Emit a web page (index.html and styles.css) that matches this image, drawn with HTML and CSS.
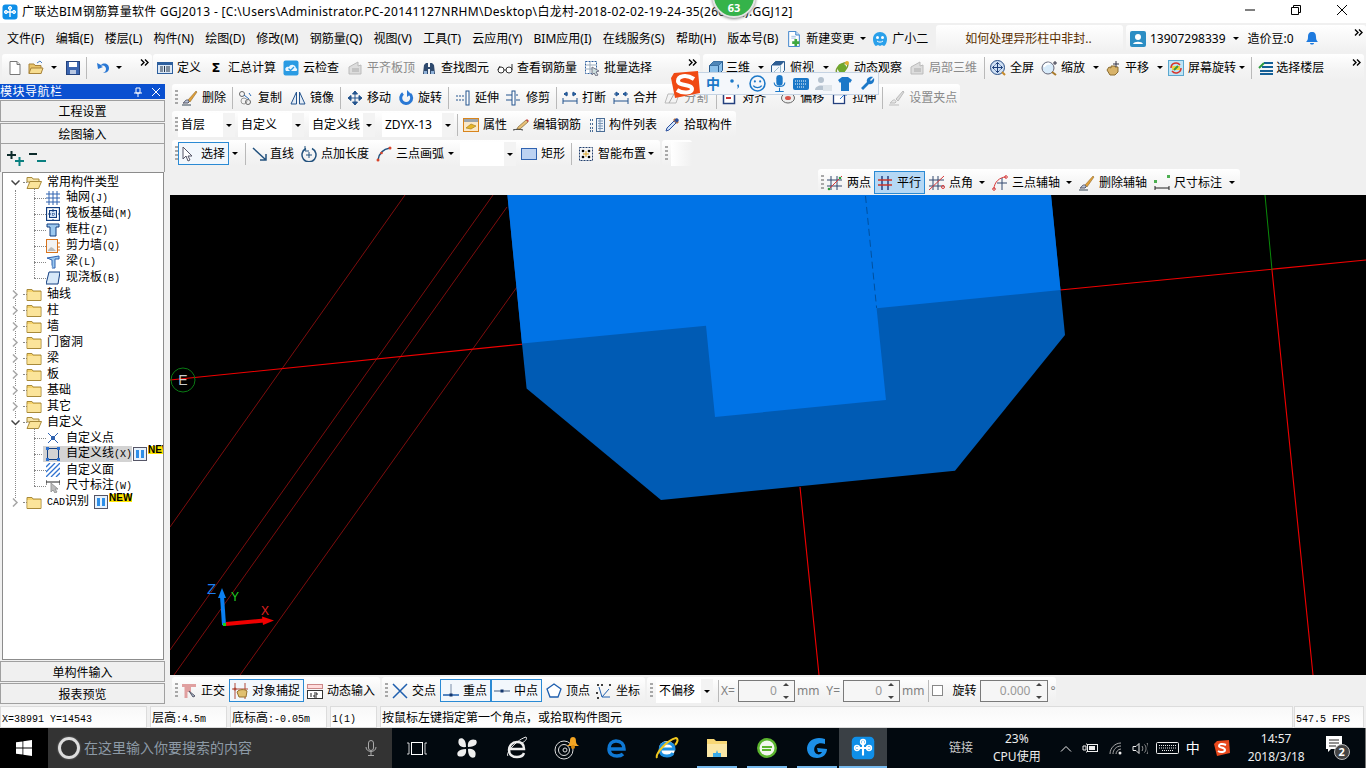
FILE: index.html
```html
<!DOCTYPE html>
<html lang="zh-CN">
<head>
<meta charset="utf-8">
<title>广联达BIM钢筋算量软件 GGJ2013</title>
<link rel="stylesheet" href="styles.css">
</head>
<body>
<svg class="defs" aria-hidden="true">
<symbol id="more" viewBox="0 0 9 7"><path d="M1 .5l3 3-3 3M5 .5l3 3-3 3" fill="none" stroke="#000" stroke-width="1.400"/></symbol>
<symbol id="app" viewBox="0 0 16 16"><rect x=".5" y=".5" width="15" height="15" rx="3" fill="#0f8fe8"/><path d="M8 3v10M3 8h10" stroke="#fff" stroke-width="1.4" fill="none"/><circle cx="4" cy="8" r="1.6" fill="none" stroke="#fff"/><circle cx="12" cy="8" r="1.6" fill="none" stroke="#fff"/><circle cx="8" cy="4" r="1.6" fill="none" stroke="#fff"/></symbol>
<symbol id="doc" viewBox="0 0 16 16"><path d="M3 1.500h7l3 3v10H3z" fill="#fff" stroke="#777"/><path d="M10 1.500v3h3" fill="#ddd" stroke="#777"/></symbol>
<symbol id="newchg" viewBox="0 0 16 18"><path d="M2 .5h8l4 4v13H2z" fill="#fff" stroke="#2a78c8"/><path d="M10 .5v4h4" fill="#cfe2f6" stroke="#2a78c8"/><path d="M5 6h5M5 8h5" stroke="#9bbbe0"/><path d="M10 9v8M6 13h8" stroke="#3fa83f" stroke-width="3"/></symbol>
<symbol id="open" viewBox="0 0 16 16"><path d="M1 4h5l1 1.500h6v8H1z" fill="#e9c46a" stroke="#a8833a"/><path d="M3 8h12l-2 5.500H1z" fill="#f7dd90" stroke="#a8833a"/><path d="M9 3l3-2 2 2" fill="none" stroke="#4a7ec0"/></symbol>
<symbol id="save" viewBox="0 0 16 16"><rect x="1.500" y="1.500" width="13" height="13" fill="#3c66b0" stroke="#24437e"/><rect x="4" y="2" width="8" height="5" fill="#fff"/><rect x="5" y="10" width="6" height="4" fill="#b9c8e2"/></symbol>
<symbol id="undo" viewBox="0 0 16 16"><path d="M2 3l1 6 5-2-2-1c3-1.500 5 1 5 3 0 2-1 3-3 4 5 0 6-3 6-5 0-4-5-6-8-3z" fill="#2a78d4"/></symbol>
<symbol id="def" viewBox="0 0 16 16"><rect x=".5" y="2.500" width="15" height="11" fill="#dce8f6" stroke="#2d5f9e"/><rect x="1" y="3" width="14" height="2" fill="#2d5f9e"/><path d="M3 7h3M3 9h3M3 11h3M9 7h4M9 9h4M9 11h4M7.500 6v6" stroke="#234" fill="none"/></symbol>
<symbol id="cloud" viewBox="0 0 16 16"><rect x=".5" y=".5" width="15" height="15" rx="2" fill="#2a9be3"/><path d="M3 11c-2-3 1-5 3-4 1-3 6-3 7 1 2 1 1 3 0 3z" fill="#eaf6ff"/><path d="M5.500 8.500l2 2 3.500-3.500" stroke="#2a9be3" stroke-width="1.300" fill="none"/></symbol>
<symbol id="gray3" viewBox="0 0 16 16"><path d="M2 14V7l9-5v4l3-1v9z" fill="#ddd" stroke="#bbb"/><path d="M5 9h7M5 11h7" stroke="#aaa"/></symbol>
<symbol id="bino" viewBox="0 0 16 16"><path d="M2 14l1-9 2-2h2v4h2V3h2l2 2 1 9H9V9H7v5z" fill="#2f4a6e"/><rect x="3" y="11" width="3" height="3" fill="#8fb1d8"/><rect x="10" y="11" width="3" height="3" fill="#8fb1d8"/></symbol>
<symbol id="glass" viewBox="0 0 16 16"><circle cx="4" cy="10" r="3" fill="#fff" stroke="#333"/><circle cx="12" cy="10" r="3" fill="#fff" stroke="#333"/><path d="M7 10h2M1 10l2-4M15 10V4" stroke="#333" fill="none"/></symbol>
<symbol id="batch" viewBox="0 0 16 16"><rect x="1.500" y="1.500" width="11" height="12" fill="#fff" stroke="#2d5f9e" stroke-dasharray="2 1"/><path d="M2 5h10M2 9h10M6 2v11" stroke="#9ab"/><path d="M8 7l7 4-3 1 2 3-2 1-2-3-2 2z" fill="#cdd" stroke="#778"/></symbol>
<symbol id="cube" viewBox="0 0 16 16"><path d="M1.500 5.500l4-4h9v9l-4 4h-9z" fill="#8cc0ea" stroke="#2a5c8e"/><path d="M1.500 5.500h9v9M10.500 5.500l4-4" fill="none" stroke="#2a5c8e"/><path d="M1.500 5.500l4-4h9l-4 4z" fill="#4f86b8"/></symbol>
<symbol id="top" viewBox="0 0 16 16"><path d="M1.500 5.500l4-4h9v9l-4 4h-9z" fill="#f4f8fc" stroke="#2a5c8e"/><path d="M1.500 5.500l4-4h9l-4 4z" fill="#2f5f94"/><path d="M10.500 5.500v9M3 13l6-6" stroke="#9bc" fill="none"/></symbol>
<symbol id="orbit" viewBox="0 0 16 16"><ellipse cx="8" cy="8" rx="7" ry="3.500" transform="rotate(-40 8 8)" fill="none" stroke="#7a9a30" stroke-width="1.500"/><circle cx="8" cy="8" r="4.500" fill="#6fa82c"/><circle cx="13" cy="3" r="2" fill="#e0b030"/></symbol>
<symbol id="full" viewBox="0 0 16 16"><circle cx="7.500" cy="7.500" r="7" fill="#cfe0f4" stroke="#2a4f86"/><path d="M7.500 2.500v10M2.500 7.500h10M7.500 2.500l-2 2M7.500 2.500l2 2M7.500 12.500l-2-2M7.500 12.500l2-2M2.500 7.500l2-2M2.500 7.500l2 2M12.500 7.500l-2-2M12.500 7.500l-2 2" stroke="#1d3f7a" fill="none"/><path d="M12 12l3 3" stroke="#c68a2a" stroke-width="2"/></symbol>
<symbol id="zoom" viewBox="0 0 16 16"><circle cx="7" cy="8" r="6" fill="#d8ebfa" stroke="#667"/><path d="M3 7c1-3 4-4 6-3" stroke="#fff" stroke-width="2" fill="none"/><path d="M11 12l4 3" stroke="#a97a2a" stroke-width="2"/><path d="M14 1v4M12 3h4" stroke="#334"/></symbol>
<symbol id="hand" viewBox="0 0 16 16"><path d="M2 10l2-3 2 1 0-2 2 0 0 0 2 0 0 1 3 0 0 5-3 3H5z" fill="#d8b36a" stroke="#8a6c30"/><path d="M11 1v6M8 4h6" stroke="#334"/></symbol>
<symbol id="rot" viewBox="0 0 16 16"><rect x=".5" y=".5" width="15" height="15" fill="#bfe4f6" stroke="#5aa7cf"/><path d="M3 8a5 5 0 0 1 9-3M13 8a5 5 0 0 1-9 3" stroke="#d8342a" stroke-width="1.500" fill="none"/><rect x="4" y="6" width="8" height="4" fill="#f2d040"/><path d="M6 10l4-4" stroke="#3a9a3a" stroke-width="2"/></symbol>
<symbol id="floors" viewBox="0 0 16 16"><path d="M6 3h9M4 7h11M2 11h13M2 14h13" stroke="#155f96" stroke-width="2"/><path d="M1 8l5-5" stroke="#2c9a3c" stroke-width="2"/></symbol>
<symbol id="brush" viewBox="0 0 16 16"><path d="M6 10l8-9 1 1-7 10z" fill="#e0a038" stroke="#805a20" stroke-width=".5"/><path d="M3 11c2-2 4-1 4 1l-1 1H1c1 0 1-1 2-2z" fill="#b8c4d8" stroke="#556"/><path d="M0 15h9" stroke="#345"/></symbol>
<symbol id="copy" viewBox="0 0 16 16"><circle cx="4" cy="4" r="2.500" fill="none" stroke="#666"/><circle cx="10" cy="12" r="2.500" fill="none" stroke="#666"/><circle cx="6" cy="11" r="3" fill="none" stroke="#999"/><path d="M6 5l5 4M11 3l2 3" stroke="#2a6cb8" fill="none"/></symbol>
<symbol id="mirror" viewBox="0 0 16 16"><path d="M6.500 2L1 14h5.500zM9.500 2L15 14H9.500z" fill="#e4ecf6" stroke="#24548e"/></symbol>
<symbol id="move" viewBox="0 0 16 16"><path d="M8 1v14M1 8h14M8 1L5.500 4h5zM8 15l-2.500-3h5zM1 8l3-2.500v5zM15 8l-3-2.500v5z" fill="#24548e" stroke="#24548e"/></symbol>
<symbol id="spin" viewBox="0 0 16 16"><path d="M5 3.500A5.500 5.500 0 1 0 12 4" fill="none" stroke="#2a78d4" stroke-width="3"/><path d="M9 0v7l4-3z" fill="#2a78d4"/></symbol>
<symbol id="ext" viewBox="0 0 16 16"><path d="M1 6h8M1 10h8" stroke="#24548e" stroke-dasharray="2 1"/><rect x="11" y="1" width="3" height="14" fill="#fff" stroke="#24548e"/></symbol>
<symbol id="trim" viewBox="0 0 16 16"><path d="M0 5h6M0 10h6M10 5h2M10 10h4" stroke="#24548e"/><rect x="6" y="1" width="3" height="14" fill="#fff" stroke="#24548e"/></symbol>
<symbol id="brk" viewBox="0 0 16 16"><path d="M1 8v6M15 8v6M1 11h14M2 4h4M14 4h-4M2 4l3-2v4zM14 4l-3-2v4z" stroke="#24548e" fill="#2a78d4"/></symbol>
<symbol id="mrg" viewBox="0 0 16 16"><path d="M1 8v6M15 8v6M1 11h14M1 4h5M15 4h-5M6 4L3 2v4zM10 4l3-2v4z" stroke="#24548e" fill="#2a78d4"/></symbol>
<symbol id="split" viewBox="0 0 16 16"><path d="M1 13l3-9h11l-3 9z" fill="#f3f3f3" stroke="#bbb"/><path d="M5 13l5-9" stroke="#aaa"/></symbol>
<symbol id="algn" viewBox="0 0 16 16"><rect x="1.500" y="2.500" width="11" height="11" fill="#fff" stroke="#24407e" stroke-width="1.500"/><path d="M4 8h5" stroke="#c33" stroke-width="2"/></symbol>
<symbol id="offs" viewBox="0 0 16 16"><ellipse cx="8" cy="8" rx="6.500" ry="5" fill="#eee" stroke="#666"/><ellipse cx="8" cy="8" rx="3" ry="2" fill="#d8544a"/></symbol>
<symbol id="strch" viewBox="0 0 16 16"><rect x="1.500" y="4.500" width="11" height="9" fill="#fff" stroke="#24407e" stroke-width="1.300"/><path d="M8 9l6-6M11 3h3v3" stroke="#2a78d4" fill="none"/></symbol>
<symbol id="gbrush" viewBox="0 0 16 16"><path d="M7 9l7-8 1 1-6 9z" fill="#ddd" stroke="#bbb"/><path d="M3 11c2-2 4-1 4 1l-1 1H1c1 0 1-1 2-2zM0 15h10" fill="#e8e8e8" stroke="#bbb"/></symbol>
<symbol id="prop" viewBox="0 0 16 16"><rect x=".5" y="1.500" width="15" height="13" fill="#fbe8c8" stroke="#d8841c"/><rect x="1" y="2" width="14" height="3" fill="#9aa4ae"/><path d="M3 11l5-4 5 2-5 3z" fill="#e7b528" stroke="#9a7818" stroke-width=".6"/></symbol>
<symbol id="edit" viewBox="0 0 16 16"><path d="M0 13c4-1 6-1 10 0" fill="none" stroke="#333"/><path d="M5 10l8-7 2 2-8 7-3 0z" fill="#e8c078" stroke="#6a5220" stroke-width=".6"/><path d="M13 3l2 2 1-1-2-2z" fill="#c44"/></symbol>
<symbol id="list" viewBox="0 0 16 16"><rect x="7.500" y="1.500" width="8" height="13" fill="#eef4fb" stroke="#4a6d96"/><path d="M9 4h5M9 6.500h5M9 9h5M9 11.500h5M11 2v12" stroke="#7d97b6"/><path d="M1 3h3M1 7h3M1 11h3M1 14h3" stroke="#4a6d96" stroke-width="2" stroke-dasharray="1 1"/></symbol>
<symbol id="pick" viewBox="0 0 16 16"><path d="M2 14l1-3 7-7 2 2-7 7z" fill="#cfe2f8" stroke="#2a4f9e"/><path d="M9 3l4 4 2-2-4-4z" fill="#d8823a"/><path d="M10 3l3-2 2 2-2 3z" fill="#2a4f9e"/></symbol>
<symbol id="cur" viewBox="0 0 16 16"><path d="M2 1v12l3-3 2 5 2-1-2-4h4z" fill="#fff" stroke="#556"/></symbol>
<symbol id="ln" viewBox="0 0 16 16"><path d="M1 2l13 12M8 14h6V8" stroke="#23527e" stroke-width="1.500" fill="none"/></symbol>
<symbol id="ptlen" viewBox="0 0 16 16"><path d="M5 2.500a7 7 0 1 0 6 0" fill="none" stroke="#23527e" stroke-width="1.500"/><path d="M4 0v5h4" fill="none" stroke="#23527e"/><path d="M8 6v6M5 9h6" stroke="#23527e"/></symbol>
<symbol id="arc" viewBox="0 0 16 16"><path d="M2 14C3 7 8 3 14 2" fill="none" stroke="#23527e" stroke-width="1.500"/><circle cx="2" cy="14" r="1.500" fill="#d8442a"/><circle cx="5.500" cy="7" r="1.300" fill="#d8442a"/><circle cx="14" cy="2" r="1.500" fill="#d8442a"/></symbol>
<symbol id="rect" viewBox="0 0 16 16"><rect x=".5" y="2.500" width="15" height="11" fill="#bcd2f2" stroke="#2f62b0"/></symbol>
<symbol id="smart" viewBox="0 0 16 16"><rect x="1.500" y="1.500" width="13" height="13" fill="#f6f6f6" stroke="#23406e" stroke-dasharray="2 1"/><circle cx="5" cy="5" r="1.300"/><circle cx="11" cy="5" r="1.300"/><circle cx="5" cy="11" r="1.300"/><circle cx="11" cy="11" r="1.300"/><path d="M8 5v6M5 8h6" stroke="#d8a020"/></symbol>
<symbol id="tp" viewBox="0 0 16 16"><path d="M4 1v14M10 1v14M0 5h15M0 11h15" stroke="#33496e"/><path d="M1 15L15 1" stroke="#d83a3a"/><circle cx="2" cy="14" r="1.300" fill="#2a9a3a"/><circle cx="13" cy="3" r="1.300" fill="#2a9a3a"/></symbol>
<symbol id="par" viewBox="0 0 16 16"><path d="M5 1v14M11 1v14" stroke="#2a3f7e" stroke-width="1.500"/><path d="M1 5h14M1 10h14" stroke="#c8342a" stroke-width="1.500"/></symbol>
<symbol id="ang" viewBox="0 0 16 16"><path d="M4 1v14M9 1v14M0 5h15M0 11h15" stroke="#33496e"/><path d="M0 15L15 1" stroke="#d83a3a"/><circle cx="14" cy="12" r="1.500" fill="none" stroke="#d83a3a"/></symbol>
<symbol id="axis3" viewBox="0 0 16 16"><path d="M2 14C2 7 8 2 14 2" fill="none" stroke="#d83a3a"/><circle cx="2" cy="14" r="1.300" fill="none" stroke="#d83a3a"/><circle cx="14" cy="2" r="1.300" fill="none" stroke="#d83a3a"/><path d="M10 3v12M5 8h10" stroke="#33496e"/></symbol>
<symbol id="dim" viewBox="0 0 16 16"><path d="M1 11v4M15 11v4M1 13h14" stroke="#222"/><rect x="0" y="5" width="3" height="3" fill="#4caf50"/><rect x="13" y="0" width="3" height="3" fill="#4caf50"/></symbol>
<symbol id="orth" viewBox="0 0 16 16"><path d="M1 1h14v3H10v5H6V4H1z" fill="#e0a0a0"/><path d="M5 3v12" stroke="#e0a0a0" stroke-width="3"/><path d="M8 8l6 5-2 1z" fill="#bbccdd" stroke="#556"/></symbol>
<symbol id="snap" viewBox="0 0 16 16"><path d="M3 0v16M13 0v16" stroke="#b04a3a"/><path d="M0 6h16" stroke="#b04a3a"/><circle cx="3" cy="6" r="1.500" fill="#b04a3a"/><path d="M5 9c2-3 8-3 10-1l-1 6H7z" fill="#e0c070" stroke="#96702c"/></symbol>
<symbol id="dyn" viewBox="0 0 16 16"><rect x=".5" y="1.500" width="15" height="4" fill="#ffdcdc" stroke="#c88"/><rect x=".5" y="7.500" width="15" height="8" fill="#fff" stroke="#333"/><path d="M4 10v4M7 10h3v2H7v2h3" stroke="#222" fill="none"/></symbol>
<symbol id="cross" viewBox="0 0 16 16"><path d="M1 1l14 14M15 1L1 15" stroke="#1f5fae" stroke-width="1.500"/></symbol>
<symbol id="perp" viewBox="0 0 16 16"><path d="M0 12h16" stroke="#1f5fae" stroke-width="1.500"/><path d="M8 1v11" stroke="#7a8ea8"/><rect x="6.500" y="10.500" width="3" height="3" fill="#12366e"/></symbol>
<symbol id="mid" viewBox="0 0 16 16"><path d="M0 8h16" stroke="#7a8ea8" stroke-width="1.500"/><rect x="6.500" y="6.500" width="3" height="3" fill="#12366e"/></symbol>
<symbol id="pent" viewBox="0 0 16 16"><path d="M8 1l7 5-3 8H4L1 6z" fill="#fff" stroke="#1f5fae" stroke-width="1.300"/></symbol>
<symbol id="coord" viewBox="0 0 16 16"><path d="M6 14L3 4M6 14h8M6 14l7-8" stroke="#1f5fae" fill="none"/><circle cx="2" cy="2" r="1"/><circle cx="6" cy="2" r="1"/><circle cx="14" cy="2" r="1"/><circle cx="1" cy="10" r="1"/><circle cx="2" cy="15" r="1"/></symbol>
<symbol id="ffold" viewBox="0 0 16 14"><path d="M1 2.500h5l1 1.500h8v9.500H1z" fill="#f6d36c" stroke="#a88a3a"/><rect x="1.500" y="5" width="13" height="8" fill="#fbe49a"/></symbol>
<symbol id="fopen" viewBox="0 0 16 14"><path d="M1 2.500h5l1 1.500h6v3H1z" fill="#f6e4a8" stroke="#a88a3a"/><path d="M1 13.500l3-7h11.500l-3 7z" fill="#fbe49a" stroke="#a88a3a"/></symbol>
<symbol id="chr" viewBox="0 0 9 9"><path d="M2 .5l4 4-4 4" fill="none" stroke="#a6a6a6" stroke-width="1.500"/></symbol>
<symbol id="chd" viewBox="0 0 9 9"><path d="M.5 2.500l4 4 4-4" fill="none" stroke="#444" stroke-width="1.500"/></symbol>
<symbol id="tgrid" viewBox="0 0 14 14"><path d="M0 3h14M0 7h14M0 11h14M3 0v14M7 0v14M11 0v14" stroke="#2f62b0"/></symbol>
<symbol id="traft" viewBox="0 0 14 14"><rect x=".5" y=".5" width="13" height="13" fill="#fff" stroke="#123e80" stroke-width="1.300"/><rect x="3.500" y="3.500" width="7" height="7" fill="#cfe0f4" stroke="#123e80"/><path d="M7 0v14M0 7h14" stroke="#123e80" stroke-dasharray="1 1"/></symbol>
<symbol id="tcol" viewBox="0 0 14 14"><path d="M1 1h12v3h-3v9H4V4H1z" fill="#9cc8ee" stroke="#123e80"/></symbol>
<symbol id="twall" viewBox="0 0 14 14"><rect x=".5" y=".5" width="11" height="13" fill="#f3f3f3" stroke="#d8731c"/><path d="M2 11l3-3 2 1 3 3H2z" fill="#bbb"/><path d="M12 4h2M12 8h2M12 11h2" stroke="#d8731c"/></symbol>
<symbol id="tbeam" viewBox="0 0 14 14"><path d="M1 3l12-2v3H9v9H6V5z" fill="#9cc8ee" stroke="#2f62b0"/><path d="M2 4l4 9" stroke="#fff"/></symbol>
<symbol id="tslab" viewBox="0 0 14 14"><path d="M3 1h11l-2 12H0z" fill="#d7e8f8" stroke="#123e80"/></symbol>
<symbol id="tpt" viewBox="0 0 14 14"><path d="M2 2l10 10M12 2L2 12" stroke="#2f62b0"/><rect x="5" y="5" width="4" height="4" fill="#2f62b0"/></symbol>
<symbol id="tln" viewBox="0 0 14 14"><rect x="1.500" y="1.500" width="11" height="11" fill="none" stroke="#123e80"/><path d="M0 0h3v3H0zM11 0h3v3h-3zM0 11h3v3H0zM11 11h3v3h-3z" fill="#2f72d0"/></symbol>
<symbol id="thatch" viewBox="0 0 14 14"><path d="M0 4l4-4M0 9l9-9M0 14L14 0M5 14l9-9M10 14l4-4" stroke="#2f72d0" stroke-width="1.300"/></symbol>
<symbol id="tdim" viewBox="0 0 14 14"><path d="M0 1v5M14 1v5M0 3h14" stroke="#222"/><path d="M5 4v9l2-2 2 3 2-1-2-3h3z" fill="#bbb" stroke="#999"/></symbol>
<symbol id="tnew" viewBox="0 0 14 14"><rect x=".5" y=".5" width="13" height="13" fill="#e8f2fc" stroke="#556"/><path d="M3 3h3v8H3zM8 3h3v8H8z" fill="#2f8fe8"/></symbol>
</svg>

<div class="title">
  <svg class="appicon"><use href="#app"/></svg>
  <span class="title-text">广联达BIM钢筋算量软件 GGJ2013 - [C:\Users\Administrator.PC-20141127NRHM\Desktop\白龙村-2018-02-02-19-24-35(2606版).GGJ12]</span>
  <div class="winbtns">
    <svg width="12" height="12" viewBox="0 0 12 12"><path d="M1 6h10" stroke="#000"/></svg>
    <svg width="12" height="12" viewBox="0 0 12 12"><path d="M1.500 3.500h7v7h-7zM3.500 3V1.500h7v7H9" fill="none" stroke="#000"/></svg>
    <svg width="12" height="12" viewBox="0 0 12 12"><path d="M1 1l10 10M11 1L1 11" stroke="#000"/></svg>
  </div>
</div>

<div class="menu">
  <nav class="menu-items">
    <span>文件(F)</span><span>编辑(E)</span><span>楼层(L)</span><span>构件(N)</span><span>绘图(D)</span><span>修改(M)</span><span>钢筋量(Q)</span><span>视图(V)</span><span>工具(T)</span><span>云应用(Y)</span><span>BIM应用(I)</span><span>在线服务(S)</span><span>帮助(H)</span><span>版本号(B)</span>
  </nav>
  <div class="t g8"><svg class="i"><use href="#newchg"/></svg>新建变更</div><i class="ar g6"></i>
  <div class="t g6"><svg class="i" viewBox="0 0 16 16"><path d="M8 1c4 0 7 3 7 7s-2 7-3 7l-2-1-2 1-2-1-2 1c-1 0-3-3-3-7s3-7 7-7z" fill="#2aa0ea"/><circle cx="5.500" cy="6.500" r="1.500" fill="#fff"/><circle cx="10.500" cy="6.500" r="1.500" fill="#fff"/><path d="M5 10c2 1.500 4 1.500 6 0" stroke="#fff" fill="none"/></svg>广小二</div>
  <div class="tab">如何处理异形柱中非封..</div>
  <div class="user">
    <svg class="i" viewBox="0 0 16 16"><rect width="16" height="16" rx="2" fill="#2c8ec4"/><circle cx="8" cy="6" r="3" fill="#fff"/><path d="M3 13c1-3 9-3 10 0z" fill="#fff"/></svg>
    <span class="phone">13907298339</span><i class="ar g7"></i><span class="g9">造价豆:0</span>
    <svg class="i g10" viewBox="0 0 16 16"><path d="M8 1c3 0 4 2 4 5s1 4 2 5H2c1-1 2-2 2-5s1-5 4-5zM6 12h4c0 2-4 2-4 0z" fill="#1e7ade"/></svg>
    <svg class="more"><use href="#more"/></svg>
  </div>
</div>

<div class="row tb1">
  <div class="seg s1a">
    <svg class="i g5"><use href="#doc"/></svg><svg class="i g5"><use href="#open"/></svg><i class="ar g7"></i><svg class="i g8"><use href="#save"/></svg><b class="sep g5"></b><svg class="i g8"><use href="#undo"/></svg><i class="ar g5"></i><svg class="more"><use href="#more"/></svg>
  </div>
  <div class="seg s1b">
    <div class="t"><svg class="i"><use href="#def"/></svg>定义</div>
    <div class="t g7"><span class="sig">Σ</span>汇总计算</div>
    <div class="t g7"><svg class="i"><use href="#cloud"/></svg>云检查</div>
    <div class="t g8 off"><svg class="i"><use href="#gray3"/></svg>平齐板顶</div>
    <div class="t g6"><svg class="i"><use href="#bino"/></svg>查找图元</div>
    <div class="t g8"><svg class="i"><use href="#glass"/></svg>查看钢筋量</div>
    <div class="t g7"><svg class="i"><use href="#batch"/></svg>批量选择</div>
    <svg class="more"><use href="#more"/></svg>
  </div>
  <div class="seg s1c">
    <div class="t tight"><svg class="i"><use href="#cube"/></svg>三维</div><i class="ar g8"></i>
    <div class="t g6"><svg class="i"><use href="#top"/></svg>俯视</div><i class="ar g9"></i>
    <div class="t g5"><svg class="i"><use href="#orbit"/></svg>动态观察</div>
    <div class="t g7 off"><svg class="i"><use href="#gray3"/></svg>局部三维</div>
    <b class="sep g7"></b>
    <div class="t g5"><svg class="i"><use href="#full"/></svg>全屏</div>
    <div class="t g7"><svg class="i"><use href="#zoom"/></svg>缩放</div><i class="ar g8"></i>
    <div class="t g6"><svg class="i"><use href="#hand"/></svg>平移</div><i class="ar g8"></i>
    <div class="t g5"><svg class="i"><use href="#rot"/></svg>屏幕旋转</div><i class="ar g3"></i>
    <b class="sep g6"></b>
    <div class="t g6 tight"><svg class="i"><use href="#floors"/></svg>选择楼层</div>
    <svg class="more"><use href="#more"/></svg>
  </div>
</div>

<div class="work">
  <aside class="nav">
    <header class="nav-head"><span>模块导航栏</span>
      <svg width="10" height="10" viewBox="0 0 10 10"><path d="M3 1h4v5H3zM1 6h8M5 6v4" fill="none" stroke="#fff"/></svg>
      <svg width="10" height="10" viewBox="0 0 10 10"><path d="M1 1l8 8M9 1L1 9" stroke="#fff"/></svg>
    </header>
    <div class="nav-btn first">工程设置</div>
    <div class="nav-btn">绘图输入</div>
    <div class="nav-tools">
      <svg width="17" height="16" viewBox="0 0 17 16"><path d="M0 5h9M4.500 1v8" stroke="#0d2b2b" stroke-width="2"/><path d="M8 11h9M12.500 7v9" stroke="#0a8080" stroke-width="2"/></svg>
      <svg width="17" height="16" viewBox="0 0 17 16"><path d="M0 4h8" stroke="#0d2b2b" stroke-width="2"/><path d="M8 11h9" stroke="#0a8080" stroke-width="2"/></svg>
    </div>
    <div class="tree">
      <div class="node"><svg class="chev"><use href="#chd"/></svg><i class="dt"></i><svg class="fold"><use href="#fopen"/></svg><span>常用构件类型</span></div>
      <div class="kids">
        <div class="leaf"><i class="dl"></i><svg class="li"><use href="#tgrid"/></svg><span>轴网<u>(J)</u></span></div>
        <div class="leaf"><i class="dl"></i><svg class="li"><use href="#traft"/></svg><span>筏板基础<u>(M)</u></span></div>
        <div class="leaf"><i class="dl"></i><svg class="li"><use href="#tcol"/></svg><span>框柱<u>(Z)</u></span></div>
        <div class="leaf"><i class="dl"></i><svg class="li"><use href="#twall"/></svg><span>剪力墙<u>(Q)</u></span></div>
        <div class="leaf"><i class="dl"></i><svg class="li"><use href="#tbeam"/></svg><span>梁<u>(L)</u></span></div>
        <div class="leaf"><i class="dl"></i><svg class="li"><use href="#tslab"/></svg><span>现浇板<u>(B)</u></span></div>
      </div>
      <div class="node"><svg class="chev"><use href="#chr"/></svg><i class="dt"></i><svg class="fold"><use href="#ffold"/></svg><span>轴线</span></div>
      <div class="node"><svg class="chev"><use href="#chr"/></svg><i class="dt"></i><svg class="fold"><use href="#ffold"/></svg><span>柱</span></div>
      <div class="node"><svg class="chev"><use href="#chr"/></svg><i class="dt"></i><svg class="fold"><use href="#ffold"/></svg><span>墙</span></div>
      <div class="node"><svg class="chev"><use href="#chr"/></svg><i class="dt"></i><svg class="fold"><use href="#ffold"/></svg><span>门窗洞</span></div>
      <div class="node"><svg class="chev"><use href="#chr"/></svg><i class="dt"></i><svg class="fold"><use href="#ffold"/></svg><span>梁</span></div>
      <div class="node"><svg class="chev"><use href="#chr"/></svg><i class="dt"></i><svg class="fold"><use href="#ffold"/></svg><span>板</span></div>
      <div class="node"><svg class="chev"><use href="#chr"/></svg><i class="dt"></i><svg class="fold"><use href="#ffold"/></svg><span>基础</span></div>
      <div class="node"><svg class="chev"><use href="#chr"/></svg><i class="dt"></i><svg class="fold"><use href="#ffold"/></svg><span>其它</span></div>
      <div class="node"><svg class="chev"><use href="#chd"/></svg><i class="dt"></i><svg class="fold"><use href="#fopen"/></svg><span>自定义</span></div>
      <div class="kids">
        <div class="leaf"><i class="dl"></i><svg class="li"><use href="#tpt"/></svg><span>自定义点</span></div>
        <div class="leaf"><i class="dl"></i><div class="hl"><svg class="li"><use href="#tln"/></svg><span>自定义线<u>(X)</u></span></div><svg class="nw"><use href="#tnew"/></svg><em class="newtag">NEW</em></div>
        <div class="leaf"><i class="dl"></i><svg class="li"><use href="#thatch"/></svg><span>自定义面</span></div>
        <div class="leaf"><i class="dl"></i><svg class="li"><use href="#tdim"/></svg><span>尺寸标注<u>(W)</u></span></div>
      </div>
      <div class="node"><svg class="chev"><use href="#chr"/></svg><i class="dt"></i><svg class="fold"><use href="#ffold"/></svg><span><u>CAD</u>识别</span><svg class="nw"><use href="#tnew"/></svg><em class="newtag">NEW</em></div>
    </div>
    <div class="nav-btn">单构件输入</div>
    <div class="nav-btn">报表预览</div>
  </aside>

  <main class="right">
    <div class="row r2">
      <div class="seg s2"><i class="grip"></i>
        <div class="t g4"><svg class="i"><use href="#brush"/></svg>删除</div><b class="sep g6"></b>
        <div class="t g5"><svg class="i"><use href="#copy"/></svg>复制</div>
        <div class="t g8"><svg class="i"><use href="#mirror"/></svg>镜像</div><b class="sep g6"></b>
        <div class="t g6"><svg class="i"><use href="#move"/></svg>移动</div>
        <div class="t g7"><svg class="i"><use href="#spin"/></svg>旋转</div><b class="sep g6"></b>
        <div class="t g6"><svg class="i"><use href="#ext"/></svg>延伸</div>
        <div class="t g7"><svg class="i"><use href="#trim"/></svg>修剪</div><b class="sep g6"></b>
        <div class="t g5"><svg class="i"><use href="#brk"/></svg>打断</div>
        <div class="t g7"><svg class="i"><use href="#mrg"/></svg>合并</div>
        <div class="t g7 off"><svg class="i"><use href="#split"/></svg>分割</div><b class="sep g8"></b>
        <div class="t g5"><svg class="i"><use href="#algn"/></svg>对齐</div>
        <div class="t g14"><svg class="i"><use href="#offs"/></svg>偏移</div>
        <div class="t g8"><svg class="i"><use href="#strch"/></svg>拉伸</div><b class="sep g6"></b>
        <div class="t g6 off"><svg class="i"><use href="#gbrush"/></svg>设置夹点</div>
      </div>
    </div>
    <div class="row r3">
      <div class="seg s3"><i class="grip"></i>
        <div class="pick w57">首层<i class="ar"></i></div>
        <div class="pick w66 g3">自定义<i class="ar"></i></div>
        <div class="pick w66 g5">自定义线<i class="ar"></i></div>
        <div class="pick w72 g7">ZDYX-13<i class="ar"></i></div>
        <b class="sep g3"></b>
        <div class="t g5"><svg class="i"><use href="#prop"/></svg>属性</div>
        <div class="t g6"><svg class="i"><use href="#edit"/></svg>编辑钢筋</div>
        <div class="t g8"><svg class="i"><use href="#list"/></svg>构件列表</div>
        <div class="t g7"><svg class="i"><use href="#pick"/></svg>拾取构件</div>
      </div>
    </div>
    <div class="row r4">
      <div class="seg s4"><i class="grip"></i>
        <div class="t btn w51"><svg class="i"><use href="#cur"/></svg>选择</div><i class="ar g3"></i>
        <b class="sep g7"></b>
        <div class="t g6 tight"><svg class="i"><use href="#ln"/></svg>直线</div>
        <div class="t g7"><svg class="i"><use href="#ptlen"/></svg>点加长度</div>
        <div class="t g7"><svg class="i"><use href="#arc"/></svg>三点画弧</div><i class="ar g4"></i>
        <div class="pick w56 g6"><i class="ar"></i></div>
        <div class="t g5"><svg class="i"><use href="#rect"/></svg>矩形</div><b class="sep g6"></b>
        <div class="t g6"><svg class="i"><use href="#smart"/></svg>智能布置</div><i class="ar g2"></i>
      </div>
      <div class="seg s4b"><i class="grip"></i><span class="fade"></span></div>
    </div>
    <div class="row r5">
      <div class="seg s5"><i class="grip"></i>
        <div class="t g3"><svg class="i"><use href="#tp"/></svg>两点</div>
        <div class="t btn on w51 g3"><svg class="i"><use href="#par"/></svg>平行</div>
        <div class="t g4"><svg class="i"><use href="#ang"/></svg>点角</div><i class="ar g6"></i>
        <div class="t g7"><svg class="i"><use href="#axis3"/></svg>三点辅轴</div><i class="ar g6"></i>
        <div class="t g7"><svg class="i"><use href="#brush"/></svg>删除辅轴</div>
        <div class="t g7"><svg class="i"><use href="#dim"/></svg>尺寸标注</div><i class="ar g7"></i>
      </div>
    </div>
    <svg class="canvas" viewBox="170 195 1196 480" role="img" aria-label="绘图区">
      <g stroke="#7d0d0d" fill="none">
        <path d="M405 195L170 527M493 195L170 650M507 207L174 675M517 287L240 675"/>
      </g>
      <g stroke="#f00000" fill="none">
        <path d="M170 380L524 344M1060 290L1366 260M800 487L819 675M1272 270L1313 675" stroke-width="1.100"/>
      </g>
      <path d="M1265 195L1272 270" stroke="#0a8a0a"/>
      <path d="M507.400 195L522 343.500L526.600 388.500L661 500L955 470.700L1065 335L1060.500 290L1051 195Z" fill="#005bb4"/>
      <path d="M507.400 195L522 343.500L706 325.700L715 417L886 400L876.600 308.300L1060.500 290L1051 195Z" fill="#0073e6"/>
      <path d="M865.500 196L876.600 308" stroke="#00509e" stroke-dasharray="7 4"/>
      <circle cx="183" cy="380" r="12" fill="none" stroke="#0a7a14"/>
      <text x="183" y="385" class="axis-e">E</text>
      <path d="M224 625L222 596" stroke="#0a7ff0" stroke-width="4"/>
      <path d="M222 588L226 598H218Z" fill="#0a7ff0"/>
      <path d="M226 624L264 620.500" stroke="#f00000" stroke-width="4"/>
      <path d="M262 616.500L274 620.500L263 625Z" fill="#f00000"/>
      <rect x="223" y="623" width="3" height="3" fill="#19d119"/>
      <text x="207" y="594" class="axis z">Z</text>
      <text x="231" y="601" class="axis y">Y</text>
      <text x="261" y="615" class="axis x">X</text>
    </svg>
    <div class="row r6">
      <div class="seg s6a"><i class="grip"></i>
        <div class="t g3"><svg class="i"><use href="#orth"/></svg>正交</div>
        <div class="t btn w75 g4"><svg class="i"><use href="#snap"/></svg>对象捕捉</div>
        <div class="t g3"><svg class="i"><use href="#dyn"/></svg>动态输入</div>
      </div>
      <div class="seg s6b"><i class="grip"></i>
        <div class="t g4"><svg class="i"><use href="#cross"/></svg>交点</div>
        <div class="t btn w51 g4"><svg class="i"><use href="#perp"/></svg>重点</div>
        <div class="t btn w51"><svg class="i"><use href="#mid"/></svg>中点</div>
        <div class="t g4"><svg class="i"><use href="#pent"/></svg>顶点</div>
        <div class="t g6"><svg class="i"><use href="#coord"/></svg>坐标</div>
      </div>
      <div class="seg s6c"><i class="grip"></i>
        <div class="pick w57 g3">不偏移<i class="ar"></i></div>
        <b class="sep g5"></b><span class="lab g2">X=</span>
        <div class="num w57 g3"><span>0</span><i class="sp"></i></div><span class="lab g2">mm</span><span class="lab g7">Y=</span>
        <div class="num w57 g3"><span>0</span><i class="sp"></i></div><span class="lab g2">mm</span>
        <b class="sep g4"></b><i class="chk g3"></i><span class="g9">旋转</span>
        <div class="num w68 g4"><span>0.000</span><i class="sp"></i></div><span class="lab g2">°</span>
      </div>
    </div>
  </main>
</div>

<footer class="status">
  <div class="c c1"><u>X=38991 Y=14543</u></div>
  <div class="c c2">层高<u>:4.5m</u></div>
  <div class="c c3">底标高<u>:-0.05m</u></div>
  <div class="c c4"><u>1(1)</u></div>
  <div class="c c5">按鼠标左键指定第一个角点，或拾取构件图元</div>
  <div class="c c6"><u>547.5 FPS</u></div>
</footer>

<div class="taskbar">
  <div class="start"><svg width="16" height="16" viewBox="0 0 16 16"><path d="M0 2.300l6.500-.9v6.200H0zM7.300 1.300L16 0v7.600H7.300zM0 8.400h6.500v6.200L0 13.700zM7.300 8.400H16V16l-8.700-1.200z" fill="#fff"/></svg></div>
  <div class="search">
    <i class="cortana"></i><span>在这里输入你要搜索的内容</span>
    <svg width="12" height="16" viewBox="0 0 12 16"><rect x="3.500" y=".5" width="5" height="10" rx="2.500" fill="none" stroke="#aaa"/><path d="M1 7c0 6 10 6 10 0M6 12v3M3 15.500h6" fill="none" stroke="#aaa"/></svg>
  </div>
  <div class="apps">
    <div class="ap"><svg width="20" height="13" viewBox="0 0 20 13"><path d="M0 1h2v11H0M20 1h-2v11h2" fill="none" stroke="#fff" stroke-width=".8"/><rect x="4.500" y=".5" width="11" height="12" fill="none" stroke="#fff"/></svg></div>
    <div class="ap"><svg width="22" height="22" viewBox="0 0 22 22"><g fill="#eee"><path d="M10 10C4 11 1 7 3 2c3-2 7 0 7 8z"/><path d="M12 10c-1-6 3-9 8-7 2 3 0 7-8 7z"/><path d="M12 12c6-1 9 3 7 8-3 2-7 0-7-8z"/><path d="M10 12c1 6-3 9-8 7-2-3 0-7 8-7z"/></g></svg></div>
    <div class="ap"><svg width="22" height="24" viewBox="0 0 22 24"><path d="M3 13h15c0-5-3-7-7-7-5 0-8 4-8 8 0 5 4 7 8 7 3 0 6-1 7-4" fill="none" stroke="#eee" stroke-width="2.500"/><path d="M2 20C-1 18 10 4 20 1c2 2-2 5-4 6" fill="none" stroke="#eee"/></svg></div>
    <div class="ap"><svg width="28" height="26" viewBox="0 0 28 26"><circle cx="11" cy="15" r="9" fill="none" stroke="#ddd"/><circle cx="11" cy="15" r="5.500" fill="none" stroke="#ddd"/><circle cx="12" cy="15" r="2" fill="none" stroke="#ddd"/><path d="M20 2c3 0 3 3 3 5s2 3 3 4H14c1-1 3-2 3-4s0-5 3-5z" fill="#f5a623"/><circle cx="20" cy="12" r="2" fill="#d68a10"/></svg></div>
    <div class="ap"><svg width="22" height="22" viewBox="0 0 22 22"><path d="M4 12h14c0-5-3-8-8-8-4 0-7 3-7 8 0 5 4 7 8 7 3 0 5-1 6-2" fill="none" stroke="#0f78d4" stroke-width="3.500"/></svg></div>
    <div class="ap"><svg width="24" height="24" viewBox="0 0 24 24"><circle cx="12" cy="13" r="8" fill="#fff"/><path d="M6 13h13c0-4-3-6-7-6-5 0-7 3-7 7s3 6 7 6c3 0 5-1 6-3" fill="none" stroke="#1d8fe0" stroke-width="3"/><path d="M2 22C0 18 12 4 21 2c3 1 1 5-1 7" fill="none" stroke="#f2c81e" stroke-width="2"/></svg></div>
    <div class="ap u"><svg width="22" height="20" viewBox="0 0 22 20"><path d="M1 1h7l2 2h11v16H1z" fill="#f8d775"/><path d="M1 6h20v13H1z" fill="#fbe7a6"/><path d="M7 19v-4h3l1-3 1 3h3v4z" fill="#39a9e8"/></svg></div>
    <div class="ap u"><svg width="22" height="22" viewBox="0 0 22 22"><circle cx="11" cy="11" r="10" fill="#5bb52e"/><circle cx="11" cy="11" r="7.500" fill="#f3f7ee"/><path d="M6 10h10M6 13h9" stroke="#5bb52e" stroke-width="2"/></svg></div>
    <div class="ap u"><svg width="24" height="24" viewBox="0 0 24 24"><path d="M20 3C12 0 3 3 2 12c0 7 5 10 10 10 6 0 10-4 10-9l-10-1 1 4 4 0c-1 2-3 3-5 2-3-1-4-6-1-9 2-2 6-2 9-1z" fill="#1c8fe8"/></svg></div>
    <div class="ap cur u"><svg width="24" height="24"><use href="#app"/></svg></div>
  </div>
  <div class="tray">
    <span class="trlink">链接</span>
    <div class="cpu"><span>23%</span><span>CPU使用</span></div>
    <svg class="ty1" width="12" height="7" viewBox="0 0 12 7"><path d="M1 6.500l5-5 5 5" fill="none" stroke="#eee"/></svg>
    <svg class="ty2" width="16" height="10" viewBox="0 0 16 10"><path d="M1 3h3v4H1zM4 1h1M4 9h1" stroke="#eee" fill="none"/><rect x="5.500" y="1.500" width="10" height="7" fill="none" stroke="#eee"/><rect x="7" y="3" width="6" height="4" fill="#eee"/></svg>
    <svg class="ty3" width="13" height="13" viewBox="0 0 13 13"><path d="M1 12C1 6 6 1 12 1M4 12c0-4 3-8 8-8M7 12c0-2 2-5 5-5" fill="none" stroke="#aaa"/><circle cx="11" cy="11" r="1.500" fill="#eee"/></svg>
    <svg class="ty4" width="16" height="13" viewBox="0 0 16 13"><path d="M1 4.500h3l3-3v10l-3-3H1z" fill="none" stroke="#eee"/><path d="M10 4c1 1 1 4 0 5M12.500 2.500c2 2 2 6 0 8M15 1c2 3 2 8 0 11" fill="none" stroke="#999"/></svg>
    <svg class="ty5" width="23" height="12" viewBox="0 0 23 12"><rect x=".5" y=".5" width="22" height="11" rx="1" fill="none" stroke="#eee"/><path d="M3 3.500h17M3 6h17M6 8.500h11" stroke="#eee" stroke-dasharray="1 1"/></svg>
    <span class="zh">中</span>
    <svg class="ty6" width="16" height="16" viewBox="0 0 16 16"><path d="M3 1l12-1 1 13-13 3-3-12z" fill="#e8481c"/><path d="M12 5C8 3 5 4 5 6c0 2 6 1 6 4 0 2-4 3-7 1" fill="none" stroke="#fff" stroke-width="2"/></svg>
    <div class="clock"><span>14:57</span><span>2018/3/18</span></div>
    <div class="notif"><svg width="26" height="24" viewBox="0 0 26 24"><path d="M1 0h16v13H6l-3 3v-3H1z" fill="#fff"/><path d="M4 4h10M4 7h10M4 10h7" stroke="#222"/><circle cx="17" cy="16" r="7.500" fill="#444" stroke="#bbb"/></svg><span class="badge">2</span></div>
    <i class="desk"></i>
  </div>
</div>

<div class="score">63</div>

<div class="ime">
  <svg class="ime-s" width="29" height="27" viewBox="0 0 29 27"><path d="M3 2l24-2 2 22-25 5-4-20z" fill="#f04a14"/><path d="M23 8C15 3 7 5 7 10c0 5 14 3 14 8 0 4-9 5-15 1" fill="none" stroke="#fff" stroke-width="4"/></svg>
  <div class="ime-bar">
    <span class="ime-zh">中</span>
    <span class="slot"><svg width="12" height="12" viewBox="0 0 12 12"><circle cx="3" cy="3" r="1.800" fill="#1b78c8"/><path d="M9 6c2 2 1 4-1 5 1-1 1-3 0-3z" fill="#1b78c8"/></svg></span>
    <span class="slot"><svg width="17" height="17" viewBox="0 0 16 16"><circle cx="8" cy="8" r="7" fill="none" stroke="#1b78c8" stroke-width="1.500"/><circle cx="5.500" cy="6" r="1" fill="#1b78c8"/><circle cx="10.500" cy="6" r="1" fill="#1b78c8"/><path d="M4 10c2 2.500 6 2.500 8 0" fill="none" stroke="#1b78c8" stroke-width="1.300"/></svg></span>
    <span class="slot"><svg width="13" height="17" viewBox="0 0 12 16"><rect x="3" y="0" width="6" height="10" rx="3" fill="#1b78c8"/><path d="M1 7c0 5 10 5 10 0M6 12v3M2 15.500h8" fill="none" stroke="#1b78c8"/></svg></span>
    <span class="slot"><svg width="16" height="12" viewBox="0 0 16 12"><rect width="16" height="12" rx="2" fill="#1b78c8"/><path d="M2 3h12M2 6h12M4 9h8" stroke="#fff" stroke-dasharray="1 1"/></svg></span>
    <span class="slot"><svg width="17" height="14" viewBox="0 0 17 14"><circle cx="6" cy="3" r="3" fill="#b5c2cf"/><path d="M0 13c0-6 12-6 12 0z" fill="#b5c2cf"/><rect x="8" y="8" width="9" height="6" fill="#dde4ea"/></svg></span>
    <span class="slot"><svg width="14" height="14" viewBox="0 0 14 14"><path d="M4 0h6l4 3-2 3-1-1v9H3V5L2 6 0 3z" fill="#1b78c8"/></svg></span>
    <span class="slot"><svg width="15" height="15" viewBox="0 0 15 15"><path d="M1 12L7 6C6 3 9 0 13 1l-3 3 1 1 3-3c1 4-2 7-5 6l-6 6z" fill="#1b78c8"/></svg></span>
  </div>
</div>
</body>
</html>
```
FILE: styles.css
```css
* { box-sizing: border-box; }
html, body { margin: 0; padding: 0; }
body {
  width: 1366px; height: 768px; overflow: hidden; position: relative;
  display: flex; flex-direction: column;
  background: #f0f0f0; color: #000;
  font: 12px/16px "Noto Sans", "Noto Sans CJK SC", sans-serif;
}
.defs { position: absolute; width: 0; height: 0; }
u { text-decoration: none; font-family: "Liberation Mono", monospace; font-size: 10px; }
.i { width: 16px; height: 16px; flex: none; display: block; }

.g2 { margin-left: 2px; } .g3 { margin-left: 3px; } .g4 { margin-left: 4px; }
.g5 { margin-left: 5px; } .g6 { margin-left: 6px; } .g7 { margin-left: 7px; }
.g8 { margin-left: 8px; } .g9 { margin-left: 9px; } .g10 { margin-left: 10px; }
.g14 { margin-left: 14px; }

/* title bar */
.title { height: 23px; flex: none; background: #fff; display: flex; align-items: center; padding-left: 2px; }
.appicon { width: 16px; height: 16px; }
.title-text { margin-left: 4px; white-space: nowrap; letter-spacing: .32px; }
.winbtns { margin-left: auto; display: flex; gap: 34px; padding-right: 18px; margin-bottom: 3px; }

/* menu */
.menu { height: 31px; flex: none; display: flex; align-items: center; padding-left: 7px; }
.menu-items { display: flex; gap: 11.25px; white-space: nowrap; }
.tab {
  margin-left: 8px; width: 187px; height: 27px; padding-left: 29px; line-height: 27px;
  color: #5a3000; background: linear-gradient(#fff, #f0f0f0); border-radius: 3px; white-space: nowrap;
}
.user {
  margin-left: auto; width: 240px; height: 27px; display: flex; align-items: center; padding-left: 4px;
  background: linear-gradient(#fff, #f0f0f0); border-radius: 3px;
}
.phone { margin-left: 4px; }

/* toolbar common */
.row { display: flex; flex: none; height: 26px; }
.seg {
  display: flex; align-items: center; height: 26px; white-space: nowrap; position: relative; padding-top: 1px;
  background: linear-gradient(#fff, #f4f4f4 60%, #f0f0f0); border-radius: 3px;
}
.t { display: flex; align-items: center; gap: 4px; flex: none; }
.tight { gap: 2px; }
.off { color: #8a8a8a; }
.ar { width: 0; height: 0; flex: none; border: 3px solid transparent; border-top: 3px solid #000; border-bottom: 0; display: block; }
.sep { width: 1px; height: 22px; flex: none; background: #b9b9b9; display: block; }
.grip {
  width: 3px; height: 16px; flex: none; margin-left: 3px;
  background: repeating-linear-gradient(#a8a8a8 0 2px, transparent 2px 4px);
}
.more {
  width: 9px; height: 7px; flex: none; display: block;
  margin-left: auto; margin-right: 3px; align-self: flex-start; margin-top: 4px;
}
.sig { width: 16px; text-align: center; font-weight: 700; font-size: 13px; font-family: "DejaVu Sans", sans-serif; }
.btn { height: 23px; border: 1px solid #2a8ad4; padding-left: 2px; background: #f2f7fc; gap: 4px; }
.btn.on { background: #b5d8f5; }
.w51 { width: 51px; } .w56 { width: 56px; } .w57 { width: 57px; }
.w66 { width: 66px; } .w68 { width: 68px; } .w72 { width: 72px; } .w75 { width: 75px; }
.pick {
  height: 24px; background: #fff; display: flex; align-items: center; padding-left: 3px; flex: none;
  position: relative; overflow: hidden;
}
.pick::after { content: ""; position: absolute; right: 0; top: 0; width: 12px; height: 100%; background: #f3f3f3; }
.pick .ar { position: absolute; right: 3px; top: 11px; z-index: 1; }

.tb1 { padding-left: 2px; gap: 1px; }
.s1a { width: 150px; }
.s1b { width: 547px; padding-left: 4px; }
.s1c { width: 661px; padding-left: 5px; margin-left: 2px; }

/* work area */
.work { flex: 1; display: flex; min-height: 0; padding-top: 4px; }
.nav { width: 165px; flex: none; display: flex; flex-direction: column; padding-bottom: 2px; }
.nav-head {
  height: 15px; background: #0a50d0; color: #fff; display: flex; align-items: center; gap: 8px;
  padding-right: 4px; flex: none;
}
.nav-head span { flex: 1; letter-spacing: .5px; line-height: 15px; }
.nav-btn {
  height: 21px; flex: none; text-align: center; line-height: 19px; padding-top: 1px; background: #f0f0f0;
  border: 1px solid #a0a0a0; margin-top: 1px;
}
.nav-btn.first { height: 22px; line-height: 20px; }
.nav-tools {
  height: 28px; flex: none; display: flex; align-items: center; gap: 5px; padding-left: 6px;
  border-right: 1px solid #a0a0a0; border-left: 1px solid #a0a0a0;
}
.tree {
  flex: 1; min-height: 0; margin: 0 1px 0 2px; background: #fff; border: 1px solid #8c8c8c;
  padding-top: 1px; overflow: hidden; position: relative;
}
.tree::before {
  content: ""; position: absolute; left: 12px; top: 17px; height: 312px;
  border-left: 1px dotted #888;
}
.node, .leaf { height: 16px; display: flex; align-items: center; white-space: nowrap; position: relative; }
.node { padding-left: 8px; }
.chev { width: 9px; height: 9px; flex: none; position: relative; background: #fff; }
.dt { width: 4px; margin-left: 3px; flex: none; border-top: 1px dotted #888; }
.fold { width: 16px; height: 14px; flex: none; margin-left: -1px; }
.node > span { margin-left: 5px; }
.kids { position: relative; }
.kids::before {
  content: ""; position: absolute; left: 31px; top: -2px; bottom: 8px;
  border-left: 1px dotted #888;
}
.leaf { padding-left: 31px; }
.dl { width: 12px; flex: none; border-top: 1px dotted #888; }
.li { width: 14px; height: 14px; flex: none; }
.leaf > span { margin-left: 6px; }
.hl { display: flex; align-items: center; height: 16px; margin-left: -3px; padding-left: 3px; background: #d3d3d3; flex: none; }
.hl span { margin-left: 6px; }
.nw { width: 14px; height: 14px; flex: none; margin-left: 1px; }
.node .nw { margin-left: 5px; }
.newtag {
  font: 700 10px/8px "Liberation Sans", sans-serif; background: #ffe600; color: #000;
  align-self: flex-start; margin-left: 1px; flex: none; height: 8px;
}

.right { flex: 1; min-width: 0; display: flex; flex-direction: column; margin-left: 5px; }
.r2, .r3, .r4, .r5 { padding-left: 2px; }
.r3 { margin-top: 1px; }
.r4 { margin-top: 3px; gap: 2px; }
.r5 { margin-top: 3px; padding-left: 648px; }
.s2 { width: 788px; }
.s3 { width: 564px; }
.s4 { width: 488px; }
.s4b { width: 30px; }
.fade { width: 24px; height: 24px; margin-left: 3px; background: linear-gradient(90deg, #fff, #f0f0f0); }
.s5 { width: 422px; }
.canvas { display: block; width: 1196px; height: 480px; background: #000; flex: none; }
.axis { font: 15px "Liberation Sans", sans-serif; }
.axis.z { fill: #1e7ff0; } .axis.y { fill: #22cc22; font-size: 12px; } .axis.x { fill: #e02020; font-size: 12px; }
.axis-e { fill: #ccc; font: 14px "Liberation Sans", sans-serif; text-anchor: middle; }

.r6 { height: 30px; padding-left: 2px; gap: 2px; align-items: center; }
.s6a { width: 208px; }
.s6b { width: 263px; }
.s6c { width: 409px; }
.lab { color: #808080; }
.num {
  height: 22px; border: 1px solid #7a7a7a; background: #f6f6f6; display: flex; align-items: center;
  justify-content: flex-end; color: #999; padding-right: 17px; position: relative; flex: none;
}
.sp { position: absolute; right: 4px; top: 4px; width: 7px; height: 12px; }
.sp::before, .sp::after { content: ""; position: absolute; left: 0; border: 3px solid transparent; }
.sp::before { top: -2px; border-bottom: 3px solid #444; border-top: 0; }
.sp::after { bottom: -2px; border-top: 3px solid #444; border-bottom: 0; }
.chk { width: 11px; height: 11px; border: 1px solid #888; background: #fff; flex: none; }

/* status */
.status { height: 22px; flex: none; display: flex; gap: 3px; }
.c {
  height: 22px; border: 1px solid #dcdcdc; background: linear-gradient(#f8f8f8, #fff); padding-left: 1px;
  line-height: 21px; white-space: nowrap; font-size: 12px;
}
.c u { font-size: 10px; }
.c1 { width: 147px; } .c2 { width: 77px; } .c3 { width: 97px; } .c4 { width: 47px; }
.c5 { width: 913px; } .c6 { width: 70px; margin-left: -2px; }

/* taskbar */
.taskbar { height: 40px; flex: none; background: #02090f; color: #eee; display: flex; align-items: center; position: relative; }
.start { width: 48px; height: 40px; background: #000; display: flex; align-items: center; justify-content: center; }
.search {
  width: 344px; height: 40px; background: #333; display: flex; align-items: center;
  padding-left: 10px; color: #8d9aa6; font-size: 14px; line-height: 16px;
}
.search svg { margin-left: auto; margin-right: 15px; }
.cortana { width: 22px; height: 22px; border-radius: 50%; border: 3px solid #ddd; flex: none; margin-right: 4px; box-shadow: 0 0 2px #888; }
.apps { display: flex; height: 40px; }
.ap { width: 50px; height: 40px; display: flex; align-items: center; justify-content: center; position: relative; }
.ap.u::after { content: ""; position: absolute; left: 5px; right: 5px; bottom: 0; height: 2px; background: #76b9ed; }
.ap.cur { width: 48px; background: #3a4045; margin-left: -3px; }
.ap.cur::after { left: 0; right: 0; }
.tray { flex: 1; height: 40px; display: flex; align-items: center; position: relative; white-space: nowrap; }
.trlink { margin-left: 62px; color: #ccc; }
.cpu { display: flex; flex-direction: column; align-items: center; margin-left: 20px; line-height: 18px; }
.ty1 { margin-left: 19px; } .ty2 { margin-left: 10px; } .ty3 { margin-left: 11px; } .ty4 { margin-left: 10px; }
.ty5 { margin-left: 8px; } .zh { margin-left: 7px; font-size: 14px; color: #fff; }
.ty6 { margin-left: 14px; }
.clock { display: flex; flex-direction: column; align-items: center; margin-left: 18px; line-height: 18px; }
.notif { margin-left: 20px; position: relative; width: 26px; height: 24px; }
.badge { position: absolute; left: 12px; top: 8px; width: 10px; text-align: center; font-size: 11px; font-weight: 700; color: #fff; }
.desk { position: absolute; right: 0; top: 0; width: 1px; height: 40px; background: #777; }

/* overlays */
.score {
  position: absolute; left: 712px; top: -26px; width: 44px; height: 44px; border-radius: 50%;
  background: #35b34a; color: #fff; font-size: 11px; font-weight: 700; text-align: center;
  line-height: 12px; padding-top: 26px; border: 2px solid #e4e4e4; box-shadow: 0 1px 3px #888;
}
.ime { position: absolute; left: 671px; top: 71px; display: flex; align-items: center; }
.ime-s { position: relative; z-index: 1; flex: none; }
.ime-bar {
  margin-left: -8px; margin-top: -2px; width: 187px; height: 23px; background: #f4f7fb; border: 1px solid #c5d3e3;
  display: flex; align-items: center; padding-left: 9px;
}
.ime-zh { color: #1b78c8; font-size: 14px; font-weight: 700; width: 22px; text-align: center; }
.slot { width: 22px; flex: none; display: flex; justify-content: center; align-items: center; }
```
